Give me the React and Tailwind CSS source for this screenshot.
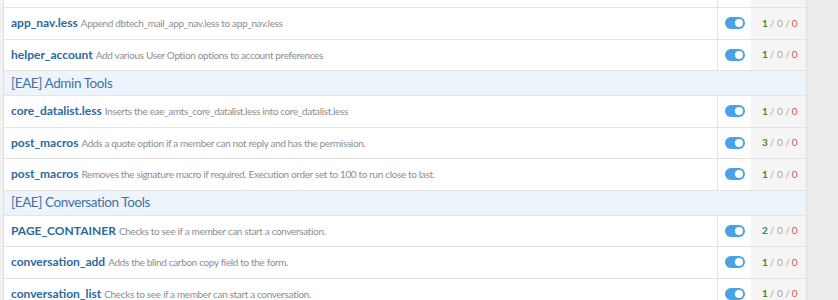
const groups = [
  {
    header: null,
    rows: [
      { title: "app_nav.less", desc: "Append dbtech_mail_app_nav.less to app_nav.less", n: 1 },
      { title: "helper_account", desc: "Add various User Option options to account preferences", n: 1 },
    ],
  },
  {
    header: "[EAE] Admin Tools",
    rows: [
      { title: "core_datalist.less", desc: "Inserts the eae_amts_core_datalist.less into core_datalist.less", n: 1 },
      { title: "post_macros", desc: "Adds a quote option if a member can not reply and has the permission.", n: 3 },
      { title: "post_macros", desc: "Removes the signature macro if required. Execution order set to 100 to run close to last.", n: 1 },
    ],
  },
  {
    header: "[EAE] Conversation Tools",
    rows: [
      { title: "PAGE_CONTAINER", desc: "Checks to see if a member can start a conversation.", n: 2 },
      { title: "conversation_add", desc: "Adds the blind carbon copy field to the form.", n: 1 },
      { title: "conversation_list", desc: "Checks to see if a member can start a conversation.", n: 1 },
    ],
  },
];

function Toggle() {
  return (
    <span className="relative inline-block h-[12px] w-[20px] rounded-full bg-[#48a2e7]">
      <span className="absolute right-[2px] top-[2px] h-[8px] w-[8px] rounded-full bg-white" />
    </span>
  );
}

function Row({ title, desc, n }) {
  return (
    <div className="grid h-[31.5px] grid-cols-[1fr_34px_55px] border-b border-[#e3e3e3]">
      <div className="flex items-center gap-[3px] overflow-hidden whitespace-nowrap pl-[7px]">
        <span className="text-[12px] font-bold text-[#2c6a9e]">{title}</span>
        <span className="pt-[1px] text-[10px] tracking-[-0.35px] text-[#8e8e8e]">{desc}</span>
      </div>
      <div className="flex items-center justify-center border-l border-[#e3e3e3]">
        <Toggle />
      </div>
      <div className="flex items-center bg-[#f5f5f5] pl-[11px] text-[10px] text-[#a6a6a6]">
        <span className="font-bold text-[#3a8a28]">{n}</span>
        <span className="ml-[2px]">/ 0 /</span>
        <span className="ml-[2px] text-[#d9534f]">0</span>
      </div>
    </div>
  );
}

export default function App() {
  return (
    <div className="flex h-[300px] w-[838px] overflow-hidden bg-[#ececec]" style={{ fontFamily: '"Segoe UI", Lato, "Open Sans", sans-serif' }}>
      <div className="w-[3px] bg-[#f2f2f2]" />
      <div className="w-[804px] border-l border-r border-[#dedede] bg-white">
        <div className="grid h-[8px] grid-cols-[1fr_34px_55px] border-b border-[#e3e3e3]">
          <div />
          <div className="border-l border-[#e3e3e3]" />
          <div className="bg-[#f5f5f5]" />
        </div>
        {groups.map((g, i) => (
          <div key={i}>
            {g.header && (
              <div className="flex h-[25px] items-center border-b border-[#dde6ef] bg-[#edf4fc] pl-[7px] text-[13.5px] tracking-[-0.4px] text-[#3f73a3]">
                {g.header}
              </div>
            )}
            {g.rows.map((r, j) => (
              <Row key={j} {...r} />
            ))}
          </div>
        ))}
      </div>
      <div className="flex-1" />
    </div>
  );
}
